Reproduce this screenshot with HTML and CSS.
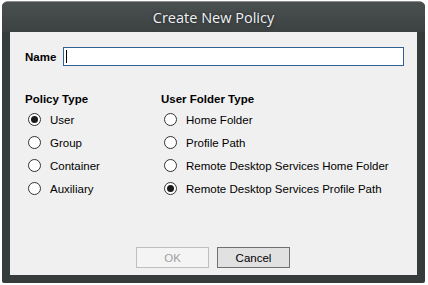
FILE: index.html
```html
<!DOCTYPE html>
<html>
<head>
<meta charset="utf-8">
<link rel="stylesheet" href="styles.css">
</head>
<body>
<div class="window">
  <div class="titlebar">Create New Policy</div>
  <div class="content">
    <div class="name-row">
      <label class="bold">Name</label>
      <div class="input"><span class="caret"></span></div>
    </div>
    <div class="groups">
      <div class="group g1">
        <div class="bold head">Policy Type</div>
        <div class="opt"><span class="radio on"></span>User</div>
        <div class="opt"><span class="radio"></span>Group</div>
        <div class="opt"><span class="radio"></span>Container</div>
        <div class="opt"><span class="radio"></span>Auxiliary</div>
      </div>
      <div class="group g2">
        <div class="bold head">User Folder Type</div>
        <div class="opt"><span class="radio"></span>Home Folder</div>
        <div class="opt"><span class="radio"></span>Profile Path</div>
        <div class="opt"><span class="radio"></span>Remote Desktop Services Home Folder</div>
        <div class="opt"><span class="radio on"></span>Remote Desktop Services Profile Path</div>
      </div>
    </div>
    <div class="buttons">
      <div class="btn disabled">OK</div>
      <div class="btn">Cancel</div>
    </div>
  </div>
</div>
</body>
</html>
```

FILE: styles.css
```css
html, body { margin: 0; padding: 0; background: #ffffff; }
body { font-family: "Liberation Sans", Arial, sans-serif; font-size: 11.5px; color: #000; }
.window {
  margin: 1px 0 0 2px;
  width: 423px;
  height: 282px;
  box-sizing: border-box;
  background: #363b3c;
  border-radius: 6px 6px 2px 2px;
  border-top: 1px solid #8a8d8e;
  box-shadow: inset 0 1px 0 #6b6f70, inset 0 2px 0 #555a5b;
  padding: 0 8px 8px 8px;
  display: flex;
  flex-direction: column;
}
.titlebar {
  height: 30px;
  background: linear-gradient(#4a4f50, #3c4142);
  margin: 0 -8px;
  border-radius: 5px 5px 0 0;
  color: #eef2f4;
  font-family: "Open Sans", "DejaVu Sans", sans-serif;
  font-size: 14.5px;
  display: flex;
  align-items: center;
  justify-content: center;
  padding-top: 1px;
  box-sizing: border-box;
  text-shadow: 0 0 3px rgba(0,0,0,0.6);
}
.content {
  flex: 1;
  background: #f0f0f0;
  display: flex;
  flex-direction: column;
  padding: 15px 13px 0 15px;
}
.bold { font-weight: bold; }
.name-row { display: flex; align-items: center; gap: 7px; }
.input {
  width: 337px;
  height: 17px;
  background: #fff;
  border: 1px solid #2f6193;
  display: flex;
  align-items: center;
  padding-left: 2px;
}
.caret { width: 1px; height: 13px; background: #000; }
.groups { display: flex; margin-top: 27px; }
.g1 { width: 136px; }
.head { height: 15px; line-height: 13px; }
.opt {
  display: flex;
  align-items: center;
  height: 23px;
  padding-left: 3px;
  gap: 9px;
}
.radio {
  width: 11px;
  height: 11px;
  border: 1px solid #333;
  border-radius: 50%;
  background: #fff;
  display: flex;
  align-items: center;
  justify-content: center;
}
.radio.on::after {
  content: "";
  width: 7px;
  height: 7px;
  border-radius: 50%;
  background: #1a1a1a;
}
.buttons {
  margin-top: auto;
  margin-bottom: 7px;
  display: flex;
  gap: 8px;
  padding-left: 111px;
}
.btn {
  width: 71px;
  height: 19px;
  border: 1px solid #707070;
  background: #e1e1e1;
  display: flex;
  align-items: center;
  justify-content: center;
}
.btn.disabled { border-color: #bfbfbf; background: #f4f4f4; color: #a0a0a0; }
```
